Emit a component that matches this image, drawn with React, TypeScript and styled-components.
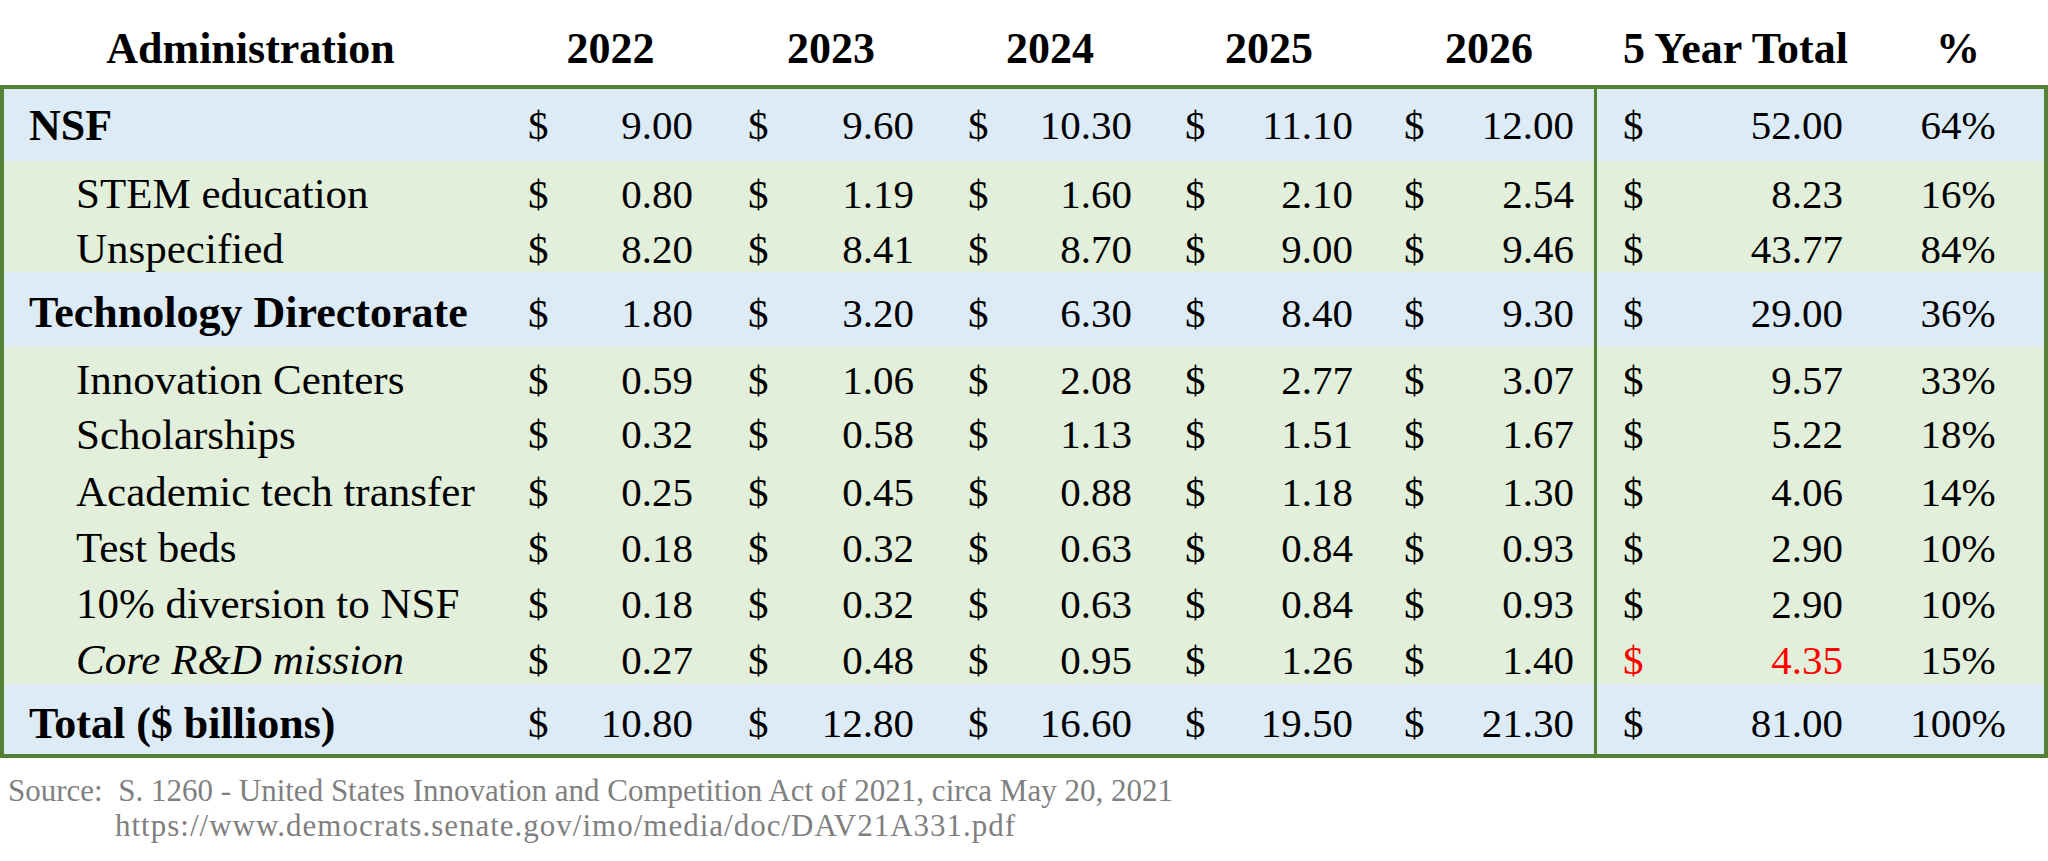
import React from "react";
import styled, { createGlobalStyle } from "styled-components";

const GlobalStyle = createGlobalStyle`
  html, body { margin: 0; padding: 0; background: #ffffff; }
  body { font-family: "Liberation Serif", "Times New Roman", serif; color: #000; }
`;

const COLS = "511px 220px 220px 220px 220px 199px 278px 172px";

const Page = styled.div`
  width: 2048px;
  display: flex;
  flex-direction: column;
`;

const HeaderRow = styled.div`
  display: grid;
  grid-template-columns: ${COLS};
  padding: 0 4px;
  height: 85px;
  align-items: center;
  padding-top: 12px;
  box-sizing: border-box;
`;

const HeadCell = styled.div<{ $pl: number; $pr: number }>`
  font-size: 44px;
  font-weight: 700;
  text-align: center;
  white-space: nowrap;
  padding-left: ${(p) => p.$pl}px;
  padding-right: ${(p) => p.$pr}px;
`;

const Table = styled.div`
  border: 4px solid #548235;
  display: flex;
  flex-direction: column;
`;

const Row = styled.div<{ $bg: string; $h: number; $shift: number }>`
  display: grid;
  grid-template-columns: ${COLS};
  background: ${(p) => p.$bg};
  height: ${(p) => p.$h}px;
  align-items: center;
  --shift: ${(p) => p.$shift * 2}px;
`;

const Label = styled.div<{ $bold?: boolean; $italic?: boolean; $indent: number }>`
  padding-left: ${(p) => p.$indent}px;
  padding-top: var(--shift);
  font-size: ${(p) => (p.$bold ? 44 : 43)}px;
  font-weight: ${(p) => (p.$bold ? 700 : 400)};
  font-style: ${(p) => (p.$italic ? "italic" : "normal")};
  white-space: nowrap;
`;

const Money = styled.div<{ $pl: number; $pr: number; $divider?: boolean; $red?: boolean }>`
  height: 100%;
  display: flex;
  align-items: center;
  justify-content: space-between;
  box-sizing: border-box;
  padding-top: var(--shift);
  padding-left: ${(p) => p.$pl}px;
  padding-right: ${(p) => p.$pr}px;
  border-left: ${(p) => (p.$divider ? "3px solid #548235" : "none")};
  font-size: 41px;
  color: ${(p) => (p.$red ? "#ff0000" : "#000")};
`;

const Pct = styled.div`
  padding-top: var(--shift);
  font-size: 41px;
  text-align: center;
`;

const Footer = styled.div`
  padding: 15px 0 0 8px;
  font-size: 31px;
  line-height: 35px;
  color: #7f7f7f;
  white-space: pre;
`;

const FooterLine = styled.div<{ $indent: number; $spacing: number }>`
  padding-left: ${(p) => p.$indent}px;
  letter-spacing: ${(p) => p.$spacing}px;
`;

const pads: Array<[number, number]> = [
  [13, 42],
  [13, 41],
  [13, 43],
  [10, 42],
  [9, 20],
];

type RowData = {
  label: string;
  kind: "head" | "sub" | "italic";
  h: number;
  shift: number;
  vals: string[];
  total: string;
  pct: string;
  red?: boolean;
};

const BLUE = "#ddebf7";
const GREEN = "#e2efda";

const rows: RowData[] = [
  { label: "NSF", kind: "head", h: 72, shift: 0, vals: ["9.00", "9.60", "10.30", "11.10", "12.00"], total: "52.00", pct: "64%" },
  { label: "STEM education", kind: "sub", h: 55, shift: 4, vals: ["0.80", "1.19", "1.60", "2.10", "2.54"], total: "8.23", pct: "16%" },
  { label: "Unspecified", kind: "sub", h: 56, shift: 4, vals: ["8.20", "8.41", "8.70", "9.00", "9.46"], total: "43.77", pct: "84%" },
  { label: "Technology Directorate", kind: "head", h: 75, shift: 3, vals: ["1.80", "3.20", "6.30", "8.40", "9.30"], total: "29.00", pct: "36%" },
  { label: "Innovation Centers", kind: "sub", h: 56, shift: 4, vals: ["0.59", "1.06", "2.08", "2.77", "3.07"], total: "9.57", pct: "33%" },
  { label: "Scholarships", kind: "sub", h: 56, shift: 3, vals: ["0.32", "0.58", "1.13", "1.51", "1.67"], total: "5.22", pct: "18%" },
  { label: "Academic tech transfer", kind: "sub", h: 56, shift: 4, vals: ["0.25", "0.45", "0.88", "1.18", "1.30"], total: "4.06", pct: "14%" },
  { label: "Test beds", kind: "sub", h: 56, shift: 4, vals: ["0.18", "0.32", "0.63", "0.84", "0.93"], total: "2.90", pct: "10%" },
  { label: "10% diversion to NSF", kind: "sub", h: 56, shift: 4, vals: ["0.18", "0.32", "0.63", "0.84", "0.93"], total: "2.90", pct: "10%" },
  { label: "Core R&D mission", kind: "italic", h: 57, shift: 4, vals: ["0.27", "0.48", "0.95", "1.26", "1.40"], total: "4.35", pct: "15%", red: true },
  { label: "Total ($ billions)", kind: "head", h: 70, shift: 4, vals: ["10.80", "12.80", "16.60", "19.50", "21.30"], total: "81.00", pct: "100%" },
];

const years = ["2022", "2023", "2024", "2025", "2026"];

export default function App() {
  return (
    <Page>
      <GlobalStyle />
      <HeaderRow>
        <HeadCell $pl={0} $pr={18}>Administration</HeadCell>
        {years.map((y, i) => (
          <HeadCell key={y} $pl={pads[i][0]} $pr={pads[i][1]}>
            {y}
          </HeadCell>
        ))}
        <HeadCell $pl={29} $pr={29}>5 Year Total</HeadCell>
        <HeadCell $pl={0} $pr={0}>%</HeadCell>
      </HeaderRow>
      <Table>
        {rows.map((r) => (
          <Row key={r.label} $bg={r.kind === "head" ? BLUE : GREEN} $h={r.h} $shift={r.shift}>
            <Label
              $bold={r.kind === "head"}
              $italic={r.kind === "italic"}
              $indent={r.kind === "head" ? 25 : 72}
            >
              {r.label}
            </Label>
            {r.vals.map((v, i) => (
              <Money key={i} $pl={pads[i][0]} $pr={pads[i][1]}>
                <span>$</span>
                <span>{v}</span>
              </Money>
            ))}
            <Money $pl={26} $pr={29} $divider $red={r.red}>
              <span>$</span>
              <span>{r.total}</span>
            </Money>
            <Pct>{r.pct}</Pct>
          </Row>
        ))}
      </Table>
      <Footer>
        <FooterLine $indent={0} $spacing={0}>Source:  S. 1260 - United States Innovation and Competition Act of 2021, circa May 20, 2021</FooterLine>
        <FooterLine $indent={107} $spacing={1}>https://www.democrats.senate.gov/imo/media/doc/DAV21A331.pdf</FooterLine>
      </Footer>
    </Page>
  );
}
